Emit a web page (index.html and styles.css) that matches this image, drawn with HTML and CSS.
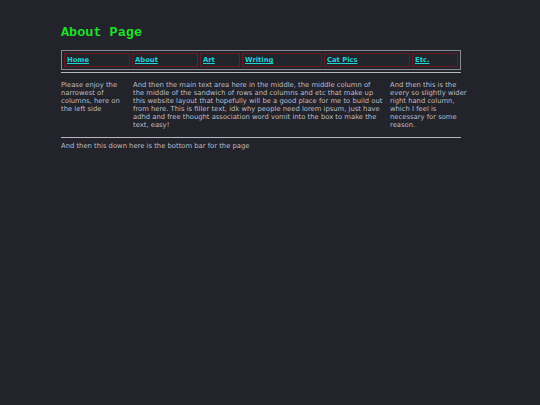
FILE: index.html
```html
<!DOCTYPE html>
<html>
<head>
<meta charset="utf-8">
<link rel="stylesheet" href="styles.css">
</head>
<body>
<div class="page">
  <h1 class="title">About Page</h1>
  <nav class="nav">
    <a class="cell w-home" href="#">Home</a>
    <a class="cell w-about" href="#">About</a>
    <a class="cell w-art" href="#">Art</a>
    <a class="cell w-writing" href="#">Writing</a>
    <a class="cell w-cat" href="#">Cat Pics</a>
    <a class="cell w-etc" href="#">Etc.</a>
  </nav>
  <hr class="rule">
  <div class="cols">
    <div class="col">Please enjoy the narrowest of columns, here on the left side</div>
    <div class="col">And then the main text area here in the middle, the middle column of the middle of the sandwich of rows and columns and etc that make up this website layout that hopefully will be a good place for me to build out from here. This is filler text, idk why people need lorem ipsum, just have adhd and free thought association word vomit into the box to make the text, easy!</div>
    <div class="col col-right">And then this is the every so slightly wider right hand column, which I feel is necessary for some reason.</div>
  </div>
  <hr class="rule">
  <div class="footer">And then this down here is the bottom bar for the page</div>
</div>
</body>
</html>
```
FILE: styles.css
```css
html, body {
  margin: 0;
  padding: 0;
  background: #23232b;
}
body {
  font-family: "DejaVu Sans", Verdana, sans-serif;
  color: #bdbdc6;
  font-size: 6.8px;
  line-height: 8px;
}
.page {
  width: 400px;
  margin-left: 61px;
  padding-top: 25px;
}
.title {
  margin: 0;
  font-family: "Liberation Mono", "Courier New", monospace;
  font-weight: bold;
  font-size: 13.5px;
  line-height: 16px;
  color: #1fe02a;
}
.nav {
  margin-top: 9px;
  display: flex;
  gap: 2px;
  padding: 2px;
  border: 1px solid #8a8a92;
  height: 14px;
}
.cell {
  box-sizing: border-box;
  height: 14px;
  border: 1px solid #6b1c24;
  padding-left: 2px;
  color: #1fd3d6;
  font-weight: bold;
  font-size: 6.8px;
  line-height: 12px;
  text-decoration: underline;
}
.w-home { width: 66px; }
.w-about { width: 66px; }
.w-art { width: 40px; }
.w-writing { width: 80px; }
.w-cat { width: 86px; }
.w-etc { width: 46px; }
.rule {
  margin: 2px 0 0 0;
  border: 0;
  border-top: 1px solid #b8b8c0;
  height: 0;
}
.cols {
  display: grid;
  grid-template-columns: 67px 250px 80px;
  column-gap: 5px;
  padding: 8px 0 6px 0;
}
.col-right {
  padding-left: 2px;
}
.footer {
  padding-top: 4px;
}
```
